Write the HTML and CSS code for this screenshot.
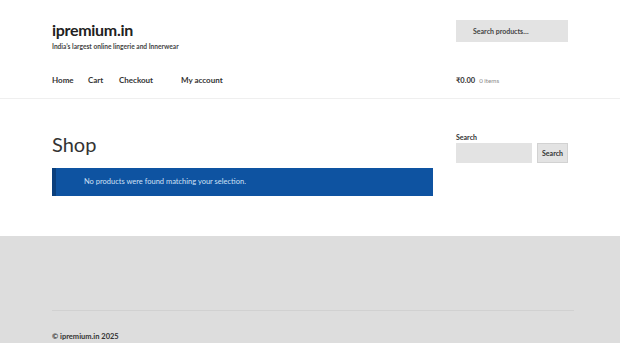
FILE: index.html
```html
<!DOCTYPE html>
<html>
<head>
<meta charset="utf-8">
<link rel="stylesheet" href="styles.css">
</head>
<body>
<header class="site-header">
  <div class="col-full header-top">
    <div class="branding">
      <div class="site-title">ipremium.in</div>
      <div class="site-desc">India’s largest online lingerie and Innerwear</div>
    </div>
    <div class="product-search">Search products…</div>
  </div>
  <div class="col-full header-nav">
    <nav class="menu">
      <a class="m-home">Home</a>
      <a class="m-cart">Cart</a>
      <a class="m-checkout">Checkout</a>
      <a class="m-account">My account</a>
    </nav>
    <div class="mini-cart"><span class="amount">₹0.00</span><span class="count">0 items</span></div>
  </div>
</header>
<main class="col-full content">
  <div class="primary">
    <h1 class="page-title">Shop</h1>
    <div class="notice">No products were found matching your selection.</div>
  </div>
  <aside class="sidebar">
    <div class="widget-title">Search</div>
    <div class="search-row">
      <div class="search-field"></div>
      <div class="search-btn">Search</div>
    </div>
  </aside>
</main>
<footer class="site-footer">
  <div class="col-full footer-inner">
    <div class="footer-rule"></div>
    <div class="copyright">© ipremium.in 2025</div>
  </div>
</footer>
</body>
</html>
```
FILE: styles.css
```css
html, body { margin: 0; padding: 0; }
body {
  font-family: "Lato", "Liberation Sans", sans-serif;
  color: #333;
  background: #fff;
  width: 620px;
  height: 343px;
  overflow: hidden;
}
.col-full { margin-left: 52px; margin-right: 52px; }
.site-header {
  height: 98px;
  border-bottom: 1px solid #efefef;
  display: flex;
  flex-direction: column;
}
.header-top {
  display: flex;
  justify-content: space-between;
  padding-top: 20px;
  height: 45px;
}
.site-title {
  font-size: 16px;
  font-weight: 700;
  color: #222;
  line-height: 20px;
  letter-spacing: -0.3px;
}
.site-desc {
  font-size: 6.6px;
  font-weight: 700;
  color: #444;
  margin-top: 1px;
  line-height: 10px;
}
.product-search {
  width: 112px;
  height: 22px;
  background: #e3e3e3;
  box-sizing: border-box;
  padding-left: 17px;
  font-size: 7px;
  font-weight: 700;
  color: #444;
  line-height: 22px;
}
.header-nav {
  display: flex;
  justify-content: space-between;
  align-items: center;
  height: 30px;
}
.menu { display: flex; }
.menu a {
  font-size: 8px;
  font-weight: 700;
  color: #333;
  display: block;
}
.m-home { width: 36px; }
.m-cart { width: 31px; }
.m-checkout { width: 62px; }
.mini-cart { width: 112px; font-size: 7.5px; }
.amount { font-weight: 700; color: #333; }
.count { font-size: 6.2px; color: #888; margin-left: 4px; }
.content {
  display: flex;
  justify-content: space-between;
  height: 137px;
}
.primary { width: 381px; }
.page-title {
  margin: 33px 0 0;
  font-size: 20px;
  font-weight: 400;
  line-height: 24px;
  color: #333;
}
.notice {
  margin-top: 12px;
  height: 28px;
  background: #0e53a1;
  border-left: 4px solid #0a3f7d;
  box-sizing: border-box;
  padding-left: 28px;
  font-size: 7.5px;
  color: #cfe0f6;
  line-height: 28px;
}
.sidebar { width: 112px; padding-top: 33px; }
.widget-title {
  font-size: 7px;
  font-weight: 700;
  color: #333;
  line-height: 10px;
}
.search-row { display: flex; gap: 5px; margin-top: 1px; }
.search-field {
  width: 76px;
  height: 20px;
  background: #e3e3e3;
}
.search-btn {
  width: 31px;
  height: 20px;
  box-sizing: border-box;
  background: #e3e3e3;
  border: 1px solid #d2d2d2;
  font-size: 7px;
  font-weight: 700;
  color: #333;
  text-align: center;
  line-height: 18px;
}
.site-footer {
  background: #dddddd;
  height: 107px;
}
.footer-inner { padding-top: 74px; }
.footer-rule { height: 1px; background: #d1d1d1; margin-right: -6px; }
.copyright {
  margin-top: 21px;
  font-size: 7.5px;
  font-weight: 700;
  color: #333;
  line-height: 10px;
}
```
